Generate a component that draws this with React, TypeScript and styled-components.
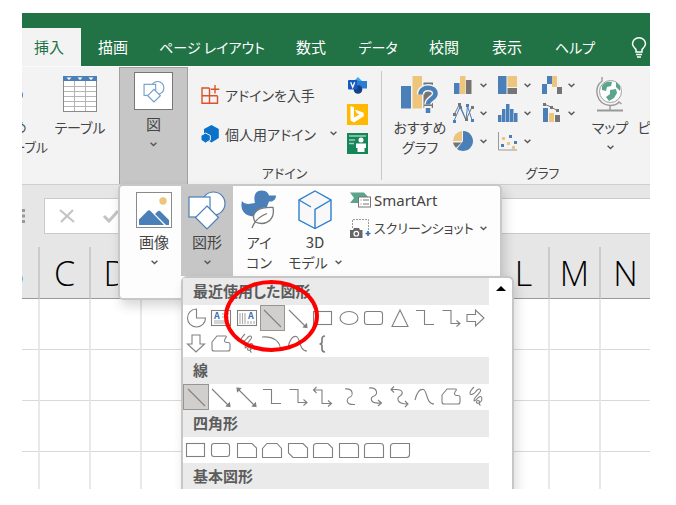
import React from "react";
import styled, { createGlobalStyle } from "styled-components";

const GlobalStyle = createGlobalStyle`
  * { box-sizing: border-box; }
  body { margin: 0; background: #fff; overflow: hidden; }
  button { font: inherit; color: inherit; background: none; border: 0; padding: 0; cursor: pointer; }
  svg { display: block; flex: none; overflow: visible; }
`;

const Page = styled.div`
  display: flex;
  height: 100vh;
  padding: 13px 26px 16px 22px;
  font-family: "Noto Sans CJK JP", "Noto Sans", sans-serif;
  font-feature-settings: "palt";
  font-size: 15px;
  line-height: 20px;
  color: #444;
`;

const AppWindow = styled.div`
  flex: 1;
  min-width: 0;
  display: flex;
  flex-direction: column;
  overflow: hidden;
  background: #fff;
`;

const TabBar = styled.nav`
  display: flex;
  flex: none;
  padding-top: 15px;
  background: #217346;
`;

const Tab = styled.button<{ $active?: boolean; $kana?: boolean; $width: number }>`
  flex: none;
  width: ${(p) => p.$width}px;
  height: 38px;
  padding-right: ${(p) => (p.$active ? 5 : 0)}px;
  white-space: nowrap;
  font-size: ${(p) => (p.$kana ? 14 : 15)}px;
  color: ${(p) => (p.$active ? "#217346" : "#fff")};
  background: ${(p) => (p.$active ? "#f3f3f3" : "transparent")};
`;

const TellMe = styled.button`
  flex: none;
  padding-left: 20px;
  color: #fff;
`;

const Ribbon = styled.div`
  position: relative;
  z-index: 2;
  display: flex;
  flex: none;
  height: 118px;
  background: #f3f3f3;
  border-top: 1px solid #fafafa;
`;

const TableGroup = styled.div`
  flex: none;
  display: flex;
  width: 97px;
  padding-top: 8px;
`;

const BigButton = styled.button<{ $width: number }>`
  flex: none;
  width: ${(p) => p.$width}px;
  display: flex;
  flex-direction: column;
  align-items: center;
  align-self: flex-start;
  gap: 4px;
  white-space: nowrap;
`;

const ClippedButton = styled(BigButton)`
  margin-left: -67px;
  margin-right: 1px;
`;

const IconBox = styled.span`
  display: flex;
  align-items: center;
  justify-content: center;
  height: 38px;
`;

const ButtonText = styled.span`
  display: flex;
  flex-direction: column;
  align-items: center;
  font-size: 14px;
`;

const ClippedText = styled(ButtonText)`
  font-size: 13px;
`;

const ChevronLine = styled.span`
  display: flex;
  align-items: center;
  justify-content: center;
  gap: 7px;
  height: 20px;
`;

const DropWrap = styled.div`
  position: relative;
  flex: none;
  display: flex;
`;

const IllustrationsButton = styled.button`
  width: 69px;
  display: flex;
  flex-direction: column;
  align-items: center;
  padding-top: 4px;
  background: #c6c6c6;
  border: solid #a0a0a0;
  border-width: 1px 1px 0 1px;
`;

const FramedIcon = styled.span`
  display: flex;
  align-items: center;
  justify-content: center;
  width: 39px;
  height: 38px;
  margin-bottom: 4px;
  background: #fff;
  border: 1px solid #777;
`;

const Group = styled.section<{ $width: number }>`
  flex: none;
  width: ${(p) => p.$width}px;
  display: flex;
  flex-direction: column;
  justify-content: space-between;
  margin: 4px 0;
  border-right: 1px solid #c8c8c8;
`;

const GroupBody = styled.div<{ $indent: number }>`
  display: flex;
  padding-left: ${(p) => p.$indent}px;
`;

const GroupLabel = styled.div`
  text-align: center;
  font-size: 13px;
  line-height: 14px;
`;

const AddinList = styled.div`
  display: flex;
  flex-direction: column;
  width: 146px;
  padding-top: 4px;
`;

const AddinButton = styled.button`
  display: flex;
  align-items: center;
  gap: 6px;
  height: 39px;
  font-size: 14px;
  white-space: nowrap;
`;

const PushRight = styled.span`
  margin-left: auto;
  margin-right: 10px;
`;

const AddinIcons = styled.div`
  display: flex;
  flex-direction: column;
`;

const SmallIconButton = styled.button`
  display: flex;
  align-items: center;
  justify-content: center;
  width: 21px;
  height: 29px;
`;

const ChartGrid = styled.div`
  display: grid;
  grid-template-columns: repeat(3, 44px);
  grid-auto-rows: 28px;
  align-content: start;
  padding-left: 6px;
`;

const ChartButton = styled.button`
  display: flex;
  align-items: center;
  gap: 6px;
`;

const TopSpaced = styled.div`
  display: flex;
  padding-top: 4px;
`;

const Gallery = styled.div`
  position: absolute;
  left: -1px;
  top: 100%;
  width: 384px;
  height: 116px;
  display: flex;
  background: #fdfdfd;
  border: 2px solid #c8c8c8;
  border-radius: 5px;
  box-shadow: 3px 6px 12px rgba(0, 0, 0, 0.16);
`;

const GalleryButton = styled.button<{ $width: number; $open?: boolean; $first?: boolean }>`
  flex: none;
  width: ${(p) => p.$width}px;
  height: 90px;
  padding: 4px 0 0 ${(p) => (p.$first ? 7 : 0)}px;
  display: flex;
  flex-direction: column;
  align-items: center;
  white-space: nowrap;
  background: ${(p) => (p.$open ? "#c6c6c6" : "transparent")};
`;

const GalleryIcon = styled.span`
  display: flex;
  align-items: center;
  height: 39px;
  margin-bottom: 3px;
`;

const GallerySide = styled.div`
  display: flex;
  flex-direction: column;
  padding-left: 5px;
`;

const SideButton = styled.button`
  display: flex;
  align-items: center;
  gap: 3px;
  height: 28px;
  white-space: nowrap;
`;

const SideText = styled.span<{ $latin?: boolean }>`
  font-family: ${(p) => (p.$latin ? '"Noto Sans"' : '"Noto Sans CJK JP"')}, sans-serif;
  font-size: ${(p) => (p.$latin ? 15 : 13)}px;
  margin-right: 3px;
`;

const ShapesPanel = styled.div`
  position: absolute;
  left: 61px;
  top: 90px;
  width: 333px;
  height: 260px;
  display: flex;
  background: #fff;
  border: 2px solid #c6c6c6;
  border-radius: 6px;
  box-shadow: 3px 6px 12px rgba(0, 0, 0, 0.14);
`;

const ShapesList = styled.div`
  flex: 1;
  min-width: 0;
`;

const ShapesHeading = styled.h3`
  margin: 0;
  height: 27px;
  padding-left: 10px;
  background: #eaeaea;
  color: #5c5c5c;
  font-size: 15px;
  font-weight: 700;
  line-height: 26px;
`;

const ShapesGrid = styled.div`
  display: grid;
  grid-template-columns: repeat(12, 1fr);
  grid-auto-rows: 26px;
`;

const ShapeButton = styled.button<{ $selected?: boolean }>`
  display: flex;
  align-items: center;
  justify-content: center;
  background: ${(p) => (p.$selected ? "#d0cfcd" : "transparent")};
  box-shadow: ${(p) => (p.$selected ? "inset 0 0 0 1px #979592" : "none")};
`;

const ScrollColumn = styled.div`
  width: 23px;
  display: flex;
  justify-content: center;
  align-items: flex-start;
  padding-top: 8px;
`;

const Highlight = styled.span`
  position: absolute;
  left: 41px;
  top: 2px;
  width: 95px;
  height: 72px;
  border: 4px solid #f00;
  border-radius: 50%;
  pointer-events: none;
`;

const FormulaBar = styled.div`
  flex: none;
  display: flex;
  align-items: center;
  gap: 19px;
  height: 63px;
  background: #e6e6e6;
  border-top: 1px solid #cfcfcf;
`;

const FormulaBox = styled.div`
  flex: 1;
  display: flex;
  align-items: center;
  gap: 28px;
  height: 36px;
  padding-left: 14px;
  background: #fff;
  border: 1px solid #cacaca;
  border-right: 0;
`;

const FormulaInput = styled.input`
  flex: 1;
  min-width: 0;
  height: 30px;
  border: 0;
  outline: 0;
  background: transparent;
  font: inherit;
`;

const SheetArea = styled.div`
  flex: 1;
  min-height: 0;
  overflow: hidden;
`;

const Sheet = styled.table`
  table-layout: fixed;
  width: 1275px;
  margin-left: -33px;
  border-collapse: separate;
  border-spacing: 0;
`;

const ColumnHead = styled.th`
  width: 51px;
  height: 52px;
  padding: 0;
  background: #e6e6e6;
  border-right: 2px solid #cbcbcb;
  border-bottom: 1px solid #999;
  color: #000;
  font-family: "Open Sans", sans-serif;
  font-size: 34px;
  font-weight: 300;
  line-height: 50px;
`;

const Cell = styled.td`
  height: 51px;
  padding: 0;
  border-right: 2px solid #e8e8e8;
  border-bottom: 1px solid #d9d9d9;
`;

const Chevron = () => (
  <svg width="7" height="5" viewBox="0 0 7 5" fill="none" stroke="#555" strokeWidth="1.4">
    <path d="M.6 .8 3.5 3.5 6.4 .8" />
  </svg>
);

const BLUE = "#4a7fb8";
const SAND = "#edc57c";
const GREY = "#757575";

const BulbIcon = () => (
  <svg width="16" height="21" viewBox="0 0 16 21" fill="none" stroke="#fff" strokeWidth="1.5">
    <path d="M5 15v-2.500C3.500 11 1.500 9.500 1.500 6.800a6.500 6 0 0 1 13 0c0 2.700-2 4.200-3.500 5.700V15zM5 17.500h6M6 20h4" />
  </svg>
);

const PivotIcon = () => (
  <svg width="42" height="36" viewBox="0 0 42 36">
    <rect x="1" y="1" width="28" height="33" fill="#fff" stroke="#888" />
    <circle cx="36" cy="19" r="6" fill={BLUE} />
  </svg>
);

const TableIcon = () => (
  <svg width="34" height="36" viewBox="0 0 34 36">
    <rect x=".5" y=".5" width="33" height="35" fill="#fff" stroke="#8a8a8a" />
    <rect width="34" height="5" fill={BLUE} />
    <path d="M3.500 1.500h5L6 4zM14.500 1.500h5L17 4zM25.500 1.500h5L28 4z" fill="#fff" />
    <path d="M11.500 5v30M22.500 5v30M1 10.500h32M1 15.500h32M1 20.500h32M1 25.500h32M1 30.500h32" stroke="#b5b5b5" fill="none" />
  </svg>
);

const ShapesIcon = ({ large }: { large?: boolean }) => (
  <svg width={large ? 38 : 22} height={large ? 38 : 21} viewBox="0 0 38 38" fill="#fff" stroke={large ? BLUE : "#6f9bcb"} strokeWidth={large ? 1.2 : 2}>
    <circle cx="25.500" cy="12.500" r="11.500" />
    <rect x="1" y="6" width="21" height="20" />
    <path d="M19 15 30.500 26.500 19 38 7.500 26.500z" />
  </svg>
);

const StoreIcon = () => (
  <svg width="18" height="19" viewBox="0 0 18 19" fill="none" stroke="#d9532c" strokeWidth="1.4">
    <path d="M8.500 3H1v15.300h15.500v-7.500M1 10.700h15.500M8.500 3v15.300M14 0v8.500M9.800 4.300h8.500" />
  </svg>
);

const HexIcon = () => (
  <svg width="18" height="18" viewBox="0 0 18 18" fill="#0a72c8">
    <path d="M10.500 0 17.800 4v9L10.500 17.500 3 13V4z" />
    <path d="M4.500 8 9.300 10.500v4.700L4.500 18 0 15.200v-4.700z" stroke="#f3f3f3" strokeWidth="1" />
  </svg>
);

const VisioIcon = () => (
  <svg width="19" height="17" viewBox="0 0 19 17">
    <path d="M10 0 15 5 10 10 5 5z" fill="#41a5ee" />
    <rect x="10" y="4" width="9" height="7.500" fill="#2b7cd3" />
    <circle cx="10" cy="12.500" r="4.300" fill="#153f86" />
    <rect y="3" width="9.500" height="9.500" rx="1" fill="#185abd" />
    <path d="m2.700 5.300 2 5 2-5" fill="none" stroke="#fff" strokeWidth="1.300" />
  </svg>
);

const SearchAddinIcon = () => (
  <svg width="21" height="21" viewBox="0 0 21 21">
    <rect width="21" height="21" fill="#ffb900" />
    <path d="M3.500 2 7 3.200v10.200l5.500-3L9.500 9 8 5.500l8.700 3.200v3.600L7 18.500l-3.500-2z" fill="#fff" />
  </svg>
);

const PeopleIcon = () => (
  <svg width="21" height="21" viewBox="0 0 21 21">
    <rect width="21" height="21" fill="#16865a" />
    <path d="M2 3h17M2 7h6M2 10.500h5" stroke="#9fd0b9" strokeWidth="1.500" />
    <circle cx="14" cy="7" r="2.500" fill="#fff" />
    <path d="M9 10.500h10v4.500h-1.500v4h-7v-4H9z" fill="#fff" />
  </svg>
);

const RecommendIcon = () => (
  <svg width="38" height="38" viewBox="0 0 38 38">
    <rect y="11" width="10" height="22.500" fill={BLUE} />
    <rect x="11.500" y="1" width="9.500" height="32.500" fill={SAND} />
    <path d="M22.500 7.500H32V33h-9.500z" fill={GREY} />
    <path d="M19.500 19.500c0-9 15-8.500 15-1 0 5.500-7.500 5-7.500 11M27 31v7" fill="none" stroke="#f3f3f3" strokeWidth="7.500" />
    <path d="M19.500 19.500c0-9 15-8.500 15-1 0 5.500-7.500 5-7.500 11M27 33v5" fill="none" stroke={BLUE} strokeWidth="4.500" />
  </svg>
);

const GlobeIcon = () => (
  <svg width="30" height="37" viewBox="0 0 30 37">
    <circle cx="15.500" cy="15.500" r="11" fill="#fff" stroke="#a0a0a0" />
    <path d="M7 10c2-4 6-5 10-4l-1 4-4 1-1 4-4-1zM15 14l6-1 1 4-3 5-5 3-3-4 4-3zM21 6l4 4v5l-4-4z" fill="#5ba58b" />
    <path d="M7 1v4C-2 12 1 28 15 29.500c4 0 7-1 9-3.500l2.500 2M15 30v4" fill="none" stroke="#999" strokeWidth="1.400" />
    <path d="M2 34.500h26" stroke="#999" strokeWidth="2" />
  </svg>
);

type Item = { name: string; art: React.ReactNode };

const chartIcons: Item[] = [
  { name: "縦棒", art: <><path d="M0 8h5.500v11H0z" fill={BLUE} /><path d="M6 1h5.500v18H6z" fill={SAND} /><path d="M12 5h5.500v14H12z" fill={GREY} /></> },
  { name: "階層構造", art: <><path d="M0 1h8.500v18H0z" fill={BLUE} /><path d="M9.500 1H19v11H9.500z" fill={SAND} /><path d="M9.500 13H19v6H9.500z" fill={GREY} /></> },
  { name: "ウォーターフォール", art: <><path d="M0 9h5v10H0zM5 1h5v8H5z" fill={BLUE} /><path d="M10 1h5v11h-5z" fill={SAND} /><path d="M15 12h5v7h-5z" fill={GREY} /></> },
  { name: "折れ線", art: <><path d="M0 12 5.500 1l6.500 16 6-13" fill="none" stroke={GREY} /><path d="M0 18 6 4l6 13 1.500-14L18 17" fill="none" stroke={BLUE} /><path d="M-1 17h3v3h-3zM12 1h3v3h-3zM17 16h3v3h-3zM5 3h3v3H5z" fill={BLUE} /><path d="M-1 10h3v3h-3zM4 0h3v3H4zM11 15h3v3h-3zM17 3h3v3h-3z" fill={GREY} /></> },
  { name: "統計", art: <path d="M0 12h3.500v7H0zM4 6h3.500v13H4zM8 1h3.500v18H8zM12 6h3.500v13H12zM16 10h3.500v9H16z" fill={BLUE} /> },
  { name: "複合", art: <><path d="M1 5h5v14H1z" fill={BLUE} /><path d="M7 10h5v9H7z" fill={SAND} /><path d="M13 12h5v7h-5z" fill={GREY} /><path d="m2 1 7 3 7 4" fill="none" stroke={GREY} /><path d="M1 0h3v3H1zM8 3h3v3H8zM14 6h3v3h-3z" fill={GREY} /></> },
  { name: "円", art: <><path d="M9 10V0a10 10 0 1 1-6 18z" fill={BLUE} /><path d="M8 10H-1A10 10 0 0 1 8 0z" fill={SAND} /><path d="M7.500 11.500H-1a10 10 0 0 0 3 5.500z" fill={GREY} /></> },
  { name: "散布図", art: <><path d="M.5 1v18H19" fill="none" stroke="#999" /><path d="M11 4h3v3h-3zM3 13h3v3H3zM16 10h3v3h-3z" fill={BLUE} /><path d="M4 6h3v3H4zM9 11h3v3H9zM14 15h3v3h-3z" fill={SAND} /></> },
];

const PictureIcon = () => (
  <svg width="36" height="36" viewBox="0 0 36 36">
    <rect x=".5" y=".5" width="35" height="35" fill="#fff" stroke="#8a8a8a" />
    <circle cx="27" cy="9" r="3.700" fill={SAND} />
    <path d="M3 33v-5.500L11.500 19q1.500-1.500 3 0L28 33zM19 22l2.500-2.500q1.500-1.500 3 0L33 28v5h-3z" fill={BLUE} />
  </svg>
);

const BirdIcon = () => (
  <svg width="36" height="39" viewBox="0 0 36 39">
    <path d="M14 13C12 5 15 .5 20.500 .5c5 0 7 3 7.500 5h7c0 4-3 6.500-7 6-1 3-2 4.500-2 6-6 0-12 2-13.500 9C2 26-1 18 1 11c3 4 8 3 13 2z" fill={BLUE} />
    <path d="M14 32c-5-10 4-15 18-14.500C34 28 27 37 14 32zM11 38c2-6 6-11 15-14.500" fill="#fff" stroke="#777" strokeWidth="1.300" />
  </svg>
);

const CubeIcon = () => (
  <svg width="34" height="39" viewBox="0 0 34 39" fill="#f8f8f8" stroke="#2b7fce" strokeWidth="1.400">
    <path d="M17 1 33 10v20L17 38.500 1 30V10z" />
    <path d="M17 38.500V19.500L33 10M1 10l12 7" fill="none" />
  </svg>
);

const SmartArtIcon = () => (
  <svg width="21" height="16" viewBox="0 0 21 16">
    <path d="M0 .5h14l5 5.500-5 5H0l4-5z" fill="#5ba58b" />
    <rect x="8.500" y="5" width="12" height="10" fill="#fff" stroke="#777" />
    <path d="M10.500 8h1M13 8h6M10.500 12h1M13 12h6" stroke="#777" />
  </svg>
);

const ScreenshotIcon = () => (
  <svg width="21" height="21" viewBox="0 0 21 21">
    <path d="M2.500 10V1.500h16V13" fill="none" stroke="#999" strokeDasharray="2 1" />
    <path d="M0 12h3l1-2h5l1 2h2.500v8H0z" fill="#666" />
    <circle cx="6.300" cy="15.700" r="2.300" fill="none" stroke="#fff" strokeWidth="1.200" />
    <path d="M15.500 15.500h5M18 13v5" stroke="#2b6cb5" strokeWidth="1.600" />
  </svg>
);

const ShapeArt = ({ children }: { children: React.ReactNode }) => (
  <svg width="24" height="24" viewBox="0 0 24 24" fill="none" stroke="#808080" strokeWidth="1.100">
    {children}
  </svg>
);

const freeform = <path d="M3 10 8 4h8.500q1.500 0 .5 1.500l-1 1.500q-1.500 3 1.500 3.500h1.500q2 0 2 2v4.500q0 2-2 2H5q-2 0-2-2z" />;
const scribble = <path d="M10 2C8 4 6 6 6 8c0 3 4 1 5.500-1s4-4.500 5-2-6.500 7-6.500 10c0 3 4-3 6-3.500s2.500 3 1 5-4.500 2.500-4.500.5 3-2 3 0-1 2 1 3.500" />;
const curve = <path d="M2 15C4 7 7 3.500 10.500 4.500c4 1.500 2.500 14.500 10.500 14.500" />;
const elbow = <path d="M3 4.500h8.500v14H21" />;
const elbowArrow = <path d="M3.500 4.500H12v13h8.500M17.500 14.500l3.500 3-3.500 3" />;
const line = <path d="m4 4 17 17" />;
const lineArrow = <><path d="m3 4 17 17" /><path d="M21 21.500 17.500 21l3-3z" fill="#777" /></>;
const rect = <rect x="2.500" y="5.500" width="18" height="13" />;
const roundRect = <rect x="2.500" y="5.500" width="18" height="13" rx="2.500" />;

const recent: Item[] = [
  { name: "部分円", art: <path d="M12.500 3v9h9a9 9 0 1 1-9-9z" /> },
  { name: "テキスト ボックス", art: <><rect x="2.500" y="4.500" width="19" height="15" /><path d="M13 8h7M13 11h7M5 15h15M5 17h15" stroke="#aaa" /><text x="5" y="13" fontSize="9" fontWeight="700" fill="#3a73b5" stroke="none">A</text></> },
  { name: "縦書きテキスト ボックス", art: <><rect x="2.500" y="4.500" width="19" height="15" /><path d="M5 7v11M7.500 7v11M10 7v11M13 15v3M16 15v3M19 15v3" stroke="#aaa" /><text x="13" y="13" fontSize="9" fontWeight="700" fill="#3a73b5" stroke="none">A</text></> },
  { name: "線", art: line },
  { name: "線矢印", art: lineArrow },
  { name: "正方形/長方形", art: rect },
  { name: "楕円", art: <ellipse cx="12" cy="12" rx="9" ry="6.500" /> },
  { name: "四角形: 角を丸くする", art: roundRect },
  { name: "二等辺三角形", art: <path d="m12 4 8 16.500H4z" /> },
  { name: "コネクタ: カギ線", art: elbow },
  { name: "コネクタ: カギ線矢印", art: elbowArrow },
  { name: "矢印: 右", art: <path d="M3 8.500h8.500V4l8.500 8-8.500 8v-4.500H3z" /> },
  { name: "矢印: 下", art: <path d="M8 3v9H3.500l8.500 8 8.500-8H16V3z" /> },
  { name: "フリーフォーム: 図形", art: freeform },
  { name: "フリーフォーム: フリーハンド", art: scribble },
  { name: "円弧", art: <path d="M2 5c11-1 19 4 18.500 14" /> },
  { name: "曲線", art: curve },
  { name: "左中かっこ", art: <path d="M14 4q-3 0-3 3v3q0 2-2.500 2 2.500 0 2.500 2v3q0 3 3 3" strokeWidth="1.700" /> },
];

const lines: Item[] = [
  { name: "直線", art: line },
  { name: "直線矢印", art: lineArrow },
  { name: "両方向矢印", art: <>{lineArrow}<path d="m2 3 3.500.5-3 3z" fill="#777" /></> },
  { name: "カギ線", art: elbow },
  { name: "カギ線矢印", art: elbowArrow },
  { name: "カギ線両矢印", art: <path d="M2.500 5H11v13.500h9M5.500 2 2.500 5l3 3M17 15.500l3.500 3-3.500 3" /> },
  { name: "曲線コネクタ", art: <path d="M8 4c9-1 8 7 5 8s-6 8 5 7.500" /> },
  { name: "曲線矢印コネクタ", art: <path d="M7 3c9-1 9 7 5 8s-5 8 7 7M16 15l3.500 3-3.500 3" /> },
  { name: "曲線両矢印コネクタ", art: <path d="M3 4.500h5c8 0 7 5 4 6.500s-4 8 7 8M6 1.500l-3 3 3 3M17 16l3 3-3 3" /> },
  { name: "曲線", art: curve },
  { name: "フリーフォーム", art: freeform },
  { name: "フリーハンド", art: scribble },
];

const rects: Item[] = [
  { name: "長方形", art: rect },
  { name: "角丸四角形", art: roundRect },
  { name: "1 つの角を切り取る", art: <path d="M2.500 5.500H17l4.500 4.500v9.500h-19z" /> },
  { name: "上の 2 つの角を切り取る", art: <path d="M7 5.500h10l4.500 5v9h-19v-9z" /> },
  { name: "対角を切り取る", art: <path d="M2.500 5.500H17l4.500 4.500v9.500H7L2.500 15z" /> },
  { name: "1 つの角を切り取り丸める", art: <path d="M5.500 5.500H17l4.500 4.500v9.500h-19v-11q0-3 3-3z" /> },
  { name: "1 つの角を丸める", art: <path d="M2.500 5.500h16q3 0 3 3v11h-19z" /> },
  { name: "上の 2 つの角を丸める", art: <path d="M5.500 5.500h13q3 0 3 3v11h-19v-11q0-3 3-3z" /> },
  { name: "対角を丸める", art: <path d="M5.500 5.500h16v11q0 3-3 3h-16v-11q0-3 3-3z" /> },
];

const ShapeSection = ({ title, items, selected }: { title: string; items: Item[]; selected?: number }) => (
  <section>
    <ShapesHeading>{title}</ShapesHeading>
    <ShapesGrid>
      {items.map((s, i) => (
        <ShapeButton key={s.name} $selected={i === selected} aria-label={s.name}>
          <ShapeArt>{s.art}</ShapeArt>
        </ShapeButton>
      ))}
    </ShapesGrid>
  </section>
);

const tabs = [
  { label: "挿入", width: 59 },
  { label: "描画", width: 64 },
  { label: "ページ レイアウト", width: 134, kana: true },
  { label: "数式", width: 64 },
  { label: "データ", width: 70, kana: true },
  { label: "校閲", width: 62 },
  { label: "表示", width: 64 },
  { label: "ヘルプ", width: 72, kana: true },
];

const columns = "BCDEFGHIJKLMNOPQRSTUVWXYZ".split("");
const rows = [1, 2, 3, 4, 5, 6, 7, 8, 9, 10, 11, 12];

export default function App() {
  return (
    <>
      <GlobalStyle />
      <Page>
        <AppWindow>
          <TabBar>
            {tabs.map((t, i) => (
              <Tab key={t.label} $active={i === 0} $kana={t.kana} $width={t.width}>{t.label}</Tab>
            ))}
            <TellMe aria-label="操作アシスト"><BulbIcon /></TellMe>
          </TabBar>

          <Ribbon>
            <TableGroup>
              <ClippedButton $width={94}>
                <IconBox><PivotIcon /></IconBox>
                <ClippedText><span>おすすめ</span><span>ピボットテーブル</span></ClippedText>
              </ClippedButton>
              <BigButton $width={60}>
                <IconBox><TableIcon /></IconBox>
                <ButtonText>テーブル</ButtonText>
              </BigButton>
            </TableGroup>

            <DropWrap>
              <IllustrationsButton aria-expanded="true">
                <FramedIcon><ShapesIcon /></FramedIcon>
                <span>図</span>
                <ChevronLine><Chevron /></ChevronLine>
              </IllustrationsButton>
              <Gallery>
                <GalleryButton $width={61} $first>
                  <GalleryIcon><PictureIcon /></GalleryIcon>
                  <span>画像</span>
                  <ChevronLine><Chevron /></ChevronLine>
                </GalleryButton>
                <GalleryButton $width={52} $open aria-expanded="true">
                  <GalleryIcon><ShapesIcon large /></GalleryIcon>
                  <span>図形</span>
                  <ChevronLine><Chevron /></ChevronLine>
                </GalleryButton>
                <GalleryButton $width={52}>
                  <GalleryIcon><BirdIcon /></GalleryIcon>
                  <ButtonText><span>アイ</span><span>コン</span></ButtonText>
                </GalleryButton>
                <GalleryButton $width={60}>
                  <GalleryIcon><CubeIcon /></GalleryIcon>
                  <span>3D</span>
                  <ButtonText><ChevronLine>モデル<Chevron /></ChevronLine></ButtonText>
                </GalleryButton>
                <GallerySide>
                  <SideButton><SmartArtIcon /><SideText $latin>SmartArt</SideText></SideButton>
                  <SideButton><ScreenshotIcon /><SideText>スクリーンショット</SideText><Chevron /></SideButton>
                </GallerySide>
                <ShapesPanel>
                  <ShapesList>
                    <ShapeSection title="最近使用した図形" items={recent} selected={3} />
                    <ShapeSection title="線" items={lines} selected={0} />
                    <ShapeSection title="四角形" items={rects} />
                    <ShapeSection title="基本図形" items={[]} />
                  </ShapesList>
                  <ScrollColumn>
                    <button aria-label="上へスクロール">
                      <svg width="10" height="5" viewBox="0 0 10 5"><path d="M5 0 10 5H0z" /></svg>
                    </button>
                  </ScrollColumn>
                  <Highlight />
                </ShapesPanel>
              </Gallery>
            </DropWrap>

            <Group $width={194}>
              <GroupBody $indent={13}>
                <AddinList>
                  <AddinButton><StoreIcon />アドインを入手</AddinButton>
                  <AddinButton><HexIcon />個人用アドイン<PushRight><Chevron /></PushRight></AddinButton>
                </AddinList>
                <AddinIcons>
                  <SmallIconButton aria-label="Visio"><VisioIcon /></SmallIconButton>
                  <SmallIconButton aria-label="Bing"><SearchAddinIcon /></SmallIconButton>
                  <SmallIconButton aria-label="People Graph"><PeopleIcon /></SmallIconButton>
                </AddinIcons>
              </GroupBody>
              <GroupLabel>アドイン</GroupLabel>
            </Group>

            <Group $width={322}>
              <GroupBody $indent={10}>
                <TopSpaced>
                  <BigButton $width={56}>
                    <IconBox><RecommendIcon /></IconBox>
                    <ButtonText><span>おすすめ</span><span>グラフ</span></ButtonText>
                  </BigButton>
                </TopSpaced>
                <ChartGrid>
                  {chartIcons.map((c) => (
                    <ChartButton key={c.name} aria-label={c.name}>
                      <svg width="20" height="20" viewBox="0 0 20 20">{c.art}</svg>
                      <Chevron />
                    </ChartButton>
                  ))}
                </ChartGrid>
                <TopSpaced>
                  <BigButton $width={48}>
                    <IconBox><GlobeIcon /></IconBox>
                    <ButtonText>マップ<ChevronLine><Chevron /></ChevronLine></ButtonText>
                  </BigButton>
                  <BigButton $width={92}>
                    <IconBox />
                    <ButtonText>ピボットグラフ</ButtonText>
                  </BigButton>
                </TopSpaced>
              </GroupBody>
              <GroupLabel>グラフ</GroupLabel>
            </Group>
          </Ribbon>

          <FormulaBar>
            <svg width="3" height="15" viewBox="0 0 3 15" fill="#999"><path d="M0 0h3v3H0zM0 5.500h3v3H0zM0 11h3v3H0z" /></svg>
            <FormulaBox>
              <button aria-label="キャンセル">
                <svg width="16" height="14" viewBox="0 0 16 14" fill="none" stroke="#c4c4c4" strokeWidth="2.200"><path d="m1 1 14 12M14 1 2 13" /></svg>
              </button>
              <button aria-label="入力">
                <svg width="16" height="14" viewBox="0 0 16 14" fill="none" stroke="#c4c4c4" strokeWidth="3"><path d="m1 7 5 5L15 2" /></svg>
              </button>
              <FormulaInput aria-label="数式バー" />
            </FormulaBox>
          </FormulaBar>

          <SheetArea>
            <Sheet>
              <thead>
                <tr>{columns.map((c) => <ColumnHead key={c} scope="col">{c}</ColumnHead>)}</tr>
              </thead>
              <tbody>
                {rows.map((r) => (
                  <tr key={r}>{columns.map((c) => <Cell key={c} />)}</tr>
                ))}
              </tbody>
            </Sheet>
          </SheetArea>
        </AppWindow>
      </Page>
    </>
  );
}
